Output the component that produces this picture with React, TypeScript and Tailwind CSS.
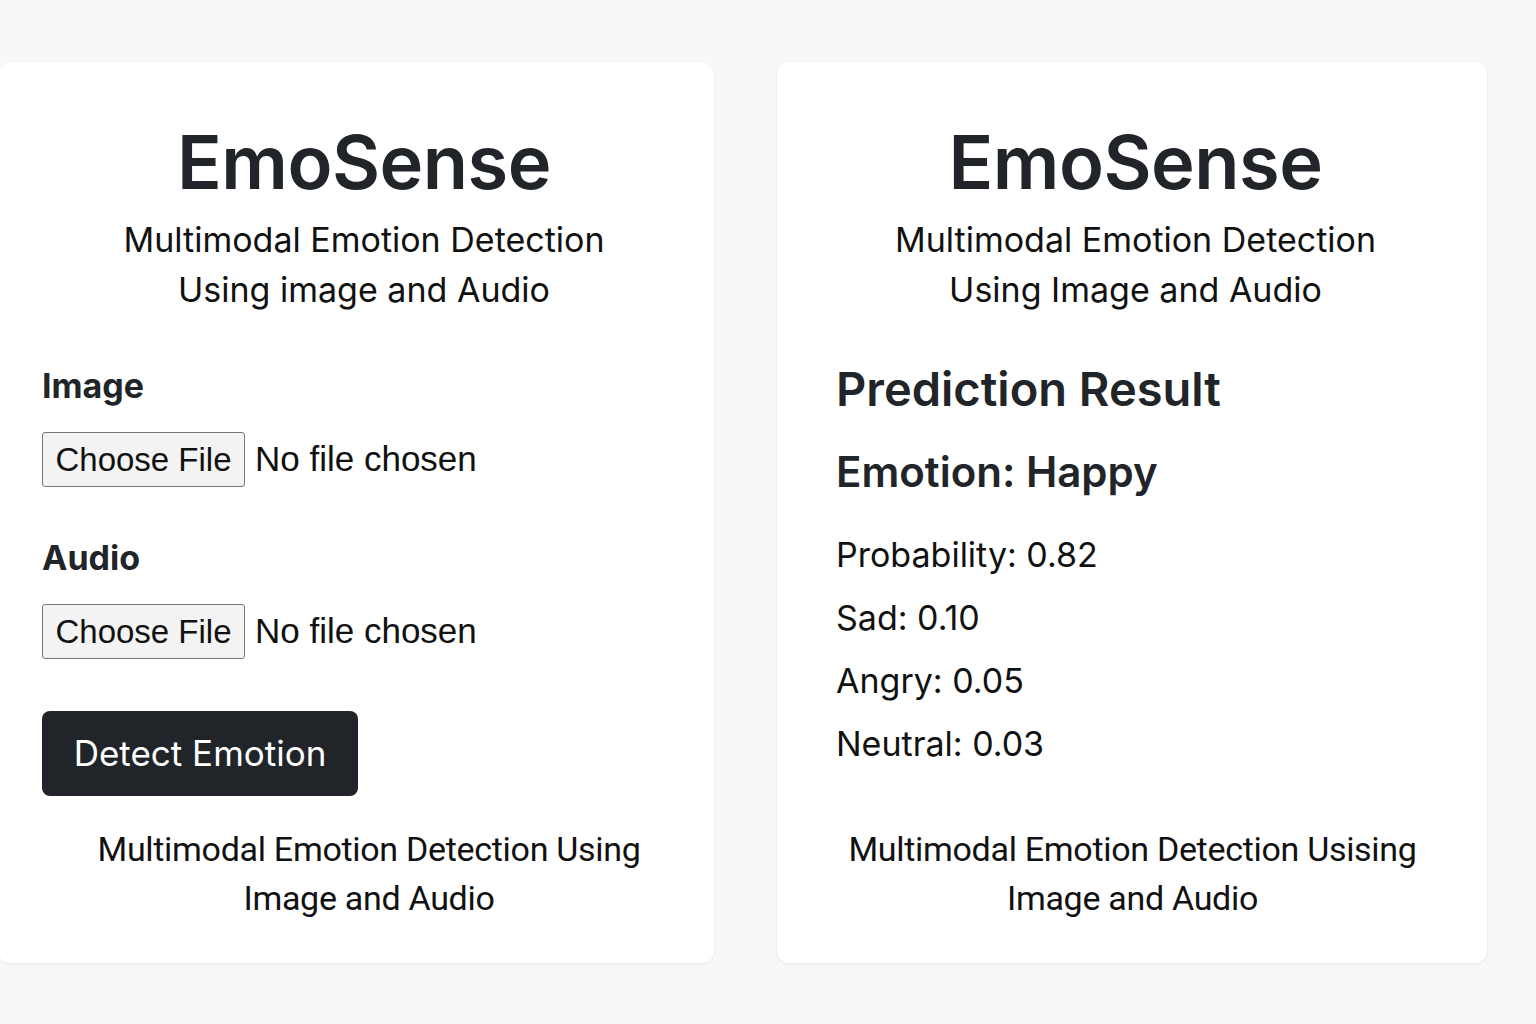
const heading = "font-['Inter',sans-serif] text-[#212529]";

function FileField({ label }: { label: string }) {
  return (
    <div className="flex flex-col">
      <div className={`${heading} text-[34px] font-bold leading-[40px]`}>{label}</div>
      <label className="mt-[26px] flex items-center font-['Liberation_Sans',Arial,sans-serif] text-[35px] text-[#111]">
        <span className="flex h-[55px] w-[203px] items-center justify-center rounded-[3px] border border-[#767676] bg-[#f3f3f3] text-[33px]">
          Choose File
        </span>
        <span className="ml-[10px]">No file chosen</span>
        <input type="file" className="hidden" />
      </label>
    </div>
  );
}

function Brand({ sub }: { sub: string }) {
  return (
    <div className="flex flex-col items-center">
      <h1 className={`${heading} text-[74px] font-semibold leading-[90px] tracking-[-0.5px]`}>EmoSense</h1>
      <p className="mt-[8px] text-center font-['Inter',sans-serif] text-[34px] leading-[50px] text-[#111]">
        Multimodal Emotion Detection
        <br />
        {sub}
      </p>
    </div>
  );
}

function Footer({ text }: { text: string }) {
  return (
    <p className="text-center font-['Roboto',sans-serif] text-[34px] leading-[49px] text-[#111] tracking-[-0.3px]">
      {text}
      <br />
      Image and Audio
    </p>
  );
}

export default function App() {
  return (
    <div className="min-h-screen bg-[#f8f8f8]">
      <main className="flex gap-[63px] pl-0 pt-[62px]">
        <section className="-ml-[2px] flex h-[901px] w-[716px] flex-col rounded-xl bg-white pb-[40px] pl-[46px] pr-[30px] pt-[55px] shadow-[0_1px_3px_rgba(0,0,0,0.08)]">
          <Brand sub="Using image and Audio" />
          <div className="-ml-[2px] mt-[51px] flex flex-col gap-[51px]">
            <FileField label="Image" />
            <FileField label="Audio" />
          </div>
          <button className="-ml-[2px] mt-[52px] h-[85px] w-[316px] rounded-lg bg-[#212529] font-['Inter',sans-serif] text-[35px] text-white">
            Detect Emotion
          </button>
          <div className="mt-auto pl-[10px]">
            <Footer text="Multimodal Emotion Detection Using" />
          </div>
        </section>

        <section className="flex h-[901px] w-[710px] flex-col rounded-xl bg-white pb-[40px] pl-[59px] pr-[52px] pt-[55px] shadow-[0_1px_3px_rgba(0,0,0,0.08)]">
          <Brand sub="Using Image and Audio" />
          <h2 className={`${heading} mt-[44px] text-[47px] font-semibold leading-[60px]`}>Prediction Result</h2>
          <h3 className={`${heading} mt-[28px] text-[42px] font-semibold leading-[50px]`}>Emotion: Happy</h3>
          <ul className="mt-[26px] flex flex-col font-['Inter',sans-serif] text-[34px] leading-[63px] text-[#111]">
            <li>Probability: 0.82</li>
            <li>Sad: 0.10</li>
            <li>Angry: 0.05</li>
            <li>Neutral: 0.03</li>
          </ul>
          <div className="mt-auto pr-[6px]">
            <Footer text="Multimodal Emotion Detection Usising" />
          </div>
        </section>
      </main>
    </div>
  );
}
